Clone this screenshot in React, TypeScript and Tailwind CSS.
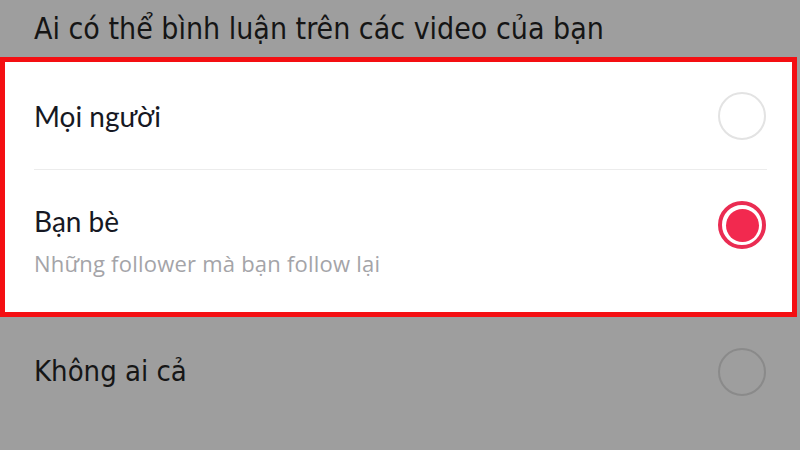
import React from "react";

function Radio({ checked, dim }: { checked?: boolean; dim?: boolean }) {
  if (checked) {
    return (
      <div className="flex h-12 w-12 items-center justify-center rounded-full border-[4px] border-[#ea2c52]">
        <div className="h-[33px] w-[33px] rounded-full bg-[#f2294f]" />
      </div>
    );
  }
  return (
    <div
      className={
        dim
          ? "h-12 w-12 rounded-full border-2 border-[#8a8a8a]"
          : "h-12 w-12 rounded-full border-2 border-[#e3e3e3]"
      }
    />
  );
}

export default function App() {
  const sans = { fontFamily: "Lato, 'Open Sans', 'Liberation Sans', sans-serif" };
  const sub = { fontFamily: "'Open Sans', Lato, 'Liberation Sans', sans-serif" };
  const narrow = {
    fontFamily: "'Liberation Sans Narrow', 'DejaVu Sans Condensed', 'Liberation Sans', sans-serif",
  };

  return (
    <div className="flex h-[450px] w-[800px] flex-col overflow-hidden bg-[#9e9e9e]">
      <div className="flex h-[57px] shrink-0 items-center pl-[34px]">
        <span className="text-[30px] leading-none text-[#151515]" style={narrow}>
          Ai có thể bình luận trên các video của bạn
        </span>
      </div>

      <div className="mr-[3px] h-[260px] shrink-0 border-[5px] border-[#f40f12] bg-white" style={sans}>
        <div className="flex h-[107px] items-center justify-between pl-[29px] pr-[26px]">
          <span className="text-[28px] text-[#161823]">Mọi người</span>
          <Radio />
        </div>
        <div className="ml-[29px] mr-[25px] h-px bg-[#ececec]" />
        <div className="flex h-[142px] items-start justify-between pl-[29px] pr-[26px] pt-[31px]">
          <div className="flex flex-col">
            <span className="text-[28px] leading-[40px] text-[#161823]">Bạn bè</span>
            <span className="mt-[8px] text-[22px] leading-[28px] tracking-[0.01em] text-[#a4a4a8]" style={sub}>
              Những follower mà bạn follow lại
            </span>
          </div>
          <Radio checked />
        </div>
      </div>

      <div className="flex h-[110px] items-center justify-between pl-[34px] pr-[34px]">
        <span className="text-[29px] text-[#161616]" style={narrow}>
          Không ai cả
        </span>
        <Radio dim />
      </div>
    </div>
  );
}
